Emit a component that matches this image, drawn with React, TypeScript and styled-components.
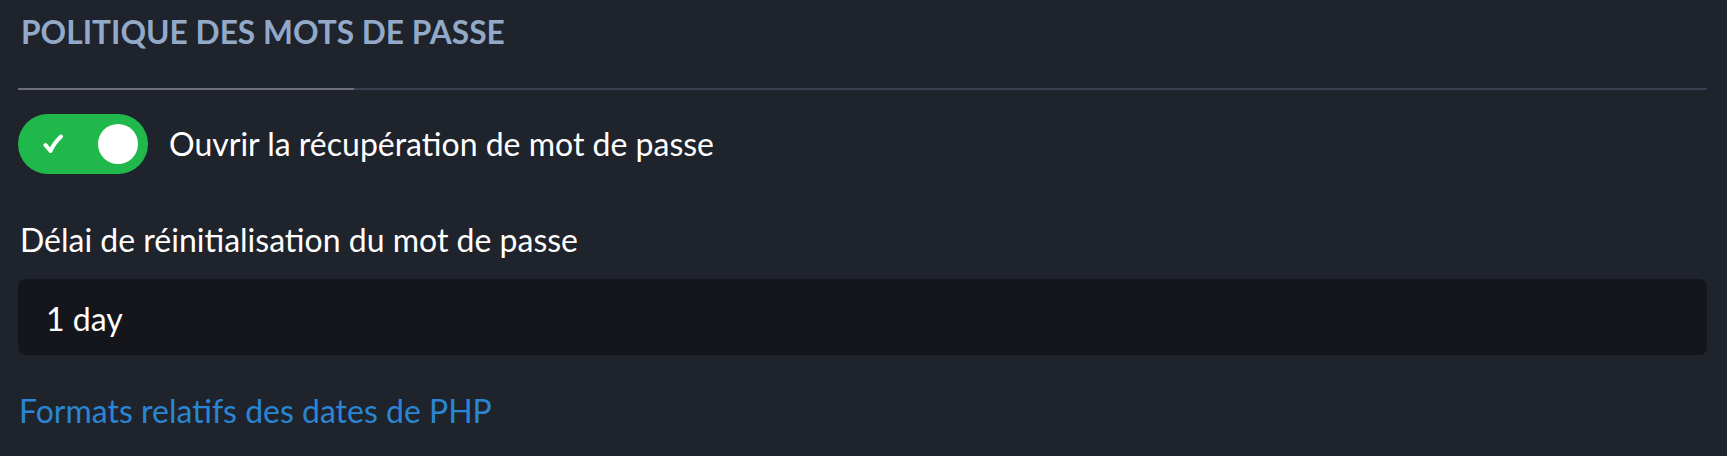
import React from "react";
import styled, { createGlobalStyle } from "styled-components";

const GlobalStyle = createGlobalStyle`
  html, body {
    margin: 0;
    padding: 0;
    background: #1f232b;
  }
  body {
    font-family: "Lato", "Open Sans", "Liberation Sans", sans-serif;
    color: #ffffff;
  }
`;

const Page = styled.div`
  min-height: 456px;
  box-sizing: border-box;
  padding: 12px 20px 0 18px;
  background: #1f232b;
  display: flex;
  flex-direction: column;
`;

const Title = styled.h2`
  margin: 0;
  padding-left: 3px;
  font-size: 31.7px;
  line-height: 40px;
  font-weight: 700;
  color: #93a9c9;
`;

const TabBar = styled.div`
  margin-top: 36px;
  height: 2px;
  background: #3b3d50;
  display: flex;
`;

const ActiveTab = styled.div`
  width: 336px;
  height: 2px;
  background: #6c6f7b;
`;

const ToggleRow = styled.label`
  margin-top: 24px;
  display: flex;
  align-items: center;
  gap: 21px;
  height: 60px;
  cursor: pointer;
`;

const Track = styled.span<{ $on: boolean }>`
  position: relative;
  width: 130px;
  height: 60px;
  border-radius: 30px;
  background: ${(p) => (p.$on ? "#21b84b" : "#555a66")};
  flex-shrink: 0;
`;

const Knob = styled.span`
  position: absolute;
  top: 10px;
  right: 10px;
  width: 40px;
  height: 40px;
  border-radius: 50%;
  background: #ffffff;
`;

const Check = styled.svg`
  position: absolute;
  left: 24px;
  top: 20px;
`;

const LabelText = styled.span`
  font-size: 32px;
  line-height: 40px;
  color: #ffffff;
`;

const FieldLabel = styled.div`
  margin-top: 46px;
  padding-left: 2px;
  font-size: 32px;
  line-height: 40px;
  color: #ffffff;
`;

const Input = styled.input`
  margin-top: 19px;
  height: 76px;
  box-sizing: border-box;
  width: 100%;
  border: none;
  outline: none;
  border-radius: 8px;
  background: #15161b;
  color: #ffffff;
  font-family: "Lato", "Open Sans", "Liberation Sans", sans-serif;
  font-size: 32px;
  padding: 2px 28px 0;
`;

const Link = styled.a`
  margin-top: 36px;
  padding-left: 1px;
  font-size: 32px;
  line-height: 40px;
  color: #2a86d4;
  text-decoration: none;
  align-self: flex-start;
`;

export default function App() {
  return (
    <>
      <GlobalStyle />
      <Page>
        <Title>POLITIQUE DES MOTS DE PASSE</Title>
        <TabBar>
          <ActiveTab />
        </TabBar>
        <ToggleRow>
          <Track $on={true}>
            <Check width="22" height="20" viewBox="0 0 22 20">
              <path
                d="M3.5 11 L8.5 17 Q12 9 19 2.5"
                fill="none"
                stroke="#ffffff"
                strokeWidth="4"
                strokeLinecap="round"
                strokeLinejoin="round"
              />
            </Check>
            <Knob />
          </Track>
          <LabelText>Ouvrir la récupération de mot de passe</LabelText>
        </ToggleRow>
        <FieldLabel>Délai de réinitialisation du mot de passe</FieldLabel>
        <Input defaultValue="1 day" />
        <Link href="#">Formats relatifs des dates de PHP</Link>
      </Page>
    </>
  );
}
